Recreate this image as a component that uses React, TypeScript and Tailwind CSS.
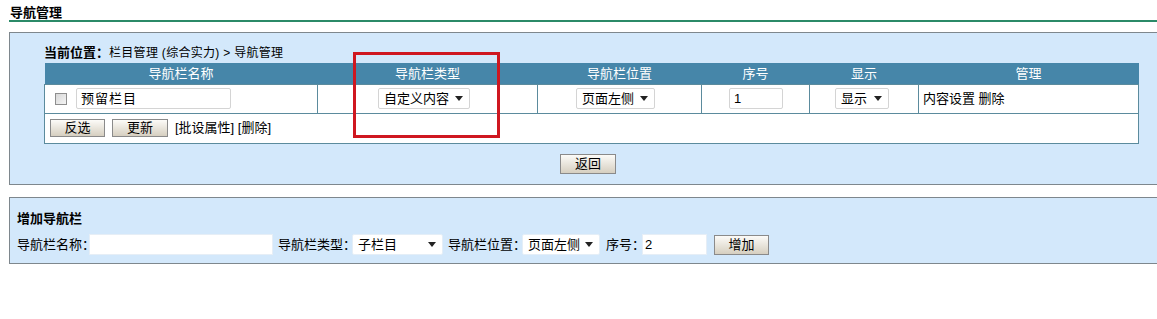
import React from 'react';

const font = "font-['Liberation_Sans','Noto_Sans_CJK_SC',sans-serif]";

function Caret() {
  return (
    <svg className="w-[8px] h-[5px] shrink-0" viewBox="0 0 8 5">
      <path d="M0 0h8L4 5z" fill="#222" />
    </svg>
  );
}

function Select({ label, w, bordered = true }: { label: string; w: string; bordered?: boolean }) {
  return (
    <span
      className={`inline-flex items-center justify-between h-[21px] pl-[5px] pr-[6px] bg-white text-[13px] text-black rounded-[2px] ${w} ${
        bordered ? 'border border-[#d4d4d4]' : 'border border-[#e4eef7]'
      }`}
    >
      <span>{label}</span>
      <Caret />
    </span>
  );
}

function Btn({ label, w, h = 'h-[18px]' }: { label: string; w: string; h?: string }) {
  return (
    <span
      className={`inline-flex items-center justify-center ${w} ${h} border border-[#8a8a8a] bg-gradient-to-b from-[#fcfbf8] to-[#d6cfc0] text-[13px] text-black`}
    >
      {label}
    </span>
  );
}

export default function App() {
  return (
    <div className={`relative w-[1157px] h-[319px] overflow-hidden bg-white ${font} text-[12px] text-black`}>
      {/* 标题 */}
      <div className="ml-[9px] pt-[4px] pl-[1px] h-[22px] border-b-2 border-[#2b8a68]">
        <span className="text-[13px] font-bold leading-[16px]">导航管理</span>
      </div>

      {/* 导航列表面板 */}
      <div className="mt-[10px] ml-[9px] h-[153px] border-y border-l border-[#7e878d] bg-[#d3e8fb] pl-[34px] pt-[10px]">
        <div className="h-[20px] flex items-center">
          <span className="font-bold text-[13px]">当前位置：</span>
          <span className="tracking-[0.3px]">栏目管理 (综合实力) &gt; 导航管理</span>
        </div>

        <div className="w-[1094px]">
          <table className="w-[1094px] table-fixed border-collapse">
            <colgroup>
              <col className="w-[273px]" />
              <col className="w-[220px]" />
              <col className="w-[164px]" />
              <col className="w-[108px]" />
              <col className="w-[109px]" />
              <col className="w-[220px]" />
            </colgroup>
            <thead>
              <tr className="h-[21px] bg-[#4686a9] text-white text-[13px]">
                <th className="font-normal text-center">导航栏名称</th>
                <th className="font-normal text-center">导航栏类型</th>
                <th className="font-normal text-center">导航栏位置</th>
                <th className="font-normal text-center">序号</th>
                <th className="font-normal text-center">显示</th>
                <th className="font-normal text-center">管理</th>
              </tr>
            </thead>
            <tbody>
              <tr className="h-[29px] bg-white">
                <td className="border border-[#5b8b9d] p-0">
                  <div className="flex items-center pl-[10px]">
                    <span className="w-[12px] h-[12px] border border-[#8e8e8e] bg-gradient-to-br from-[#d8d8d8] to-[#f4f4f4]" />
                    <span className="ml-[9px] w-[155px] h-[21px] border border-[#d4d4d4] rounded-[2px] bg-white pl-[4px] text-[13px] leading-[19px] tracking-[1px]">
                      预留栏目
                    </span>
                  </div>
                </td>
                <td className="border border-[#5b8b9d] p-0 pl-[60px]">
                  <Select label="自定义内容" w="w-[92px]" />
                </td>
                <td className="border border-[#5b8b9d] p-0 pl-[38px]">
                  <Select label="页面左侧" w="w-[79px]" />
                </td>
                <td className="border border-[#5b8b9d] p-0 pl-[27px]">
                  <span className="inline-block w-[54px] h-[21px] border border-[#d4d4d4] rounded-[2px] bg-white pl-[4px] text-[13px] leading-[19px]">
                    1
                  </span>
                </td>
                <td className="border border-[#5b8b9d] p-0 pl-[25px]">
                  <Select label="显示" w="w-[54px]" />
                </td>
                <td className="border border-[#5b8b9d] p-0 pl-[4px] text-[13px]">内容设置 删除</td>
              </tr>
              <tr className="h-[30px] bg-white">
                <td colSpan={6} className="border border-[#5b8b9d] p-0 pl-[5px]">
                  <div className="flex items-center gap-[7px]">
                    <Btn label="反选" w="w-[55px]" />
                    <Btn label="更新" w="w-[56px]" />
                    <span className="text-[13px]">[批设属性] [删除]</span>
                  </div>
                </td>
              </tr>
            </tbody>
          </table>
          <div className="flex justify-center mt-[10px] pr-[6px]">
            <Btn label="返回" w="w-[56px]" h="h-[20px]" />
          </div>
        </div>
      </div>

      {/* 增加导航栏面板 */}
      <div className="mt-[12px] ml-[9px] h-[67px] border-y border-l border-[#7e878d] bg-[#d3e8fb] pl-[7px] pt-[11px]">
        <div className="h-[20px] flex items-center font-bold text-[13px]">增加导航栏</div>
        <div className="mt-[5px] flex items-center h-[21px] text-[13px]">
          <span>导航栏名称：</span>
          <span className="ml-[-6px] w-[184px] h-[21px] bg-white border border-[#e6eef6]" />
          <span className="ml-[5px]">导航栏类型：</span>
          <span className="ml-[-4px]">
            <Select label="子栏目" w="w-[91px]" bordered={false} />
          </span>
          <span className="ml-[5px]">导航栏位置：</span>
          <span className="ml-[-4px]">
            <Select label="页面左侧" w="w-[78px]" bordered={false} />
          </span>
          <span className="ml-[6px]">序号：</span>
          <span className="ml-[-3px] w-[65px] h-[21px] bg-white border border-[#e6eef6] pl-[2px] leading-[19px]">2</span>
          <span className="ml-[7px]">
            <Btn label="增加" w="w-[55px]" h="h-[20px]" />
          </span>
        </div>
      </div>

      {/* 红色标注框 */}
      <div className="absolute left-[353px] top-[52px] w-[147px] h-[86px] border-[3px] border-[#cf1720]" />
    </div>
  );
}
